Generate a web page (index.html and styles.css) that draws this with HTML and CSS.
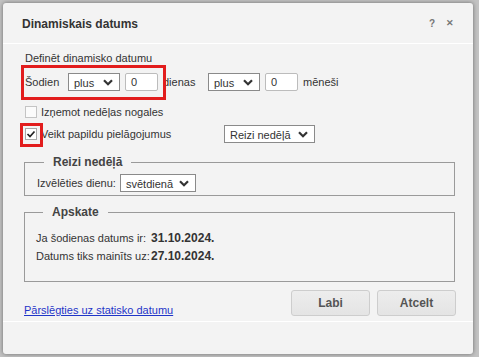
FILE: index.html
```html
<!DOCTYPE html>
<html lang="lv">
<head>
  <meta charset="UTF-8">
  <meta name="viewport" content="width=device-width, initial-scale=1.0">
  <title>Dinamiskais datums</title>
  <link rel="stylesheet" href="styles.css">
</head>
<body>
  <div class="dialog">
    <!-- Title bar -->
    <div class="title-bar">
      <span class="title">Dinamiskais datums</span>
      <span class="title-icons">
        <span class="icon-help">?</span>
        <span class="icon-close">&#x2715;</span>
      </span>
    </div>

    <div class="content">
      <div class="section-label">Definēt dinamisko datumu</div>

      <div class="row offset-row">
        <span class="lbl lbl-today">Šodien</span>
        <div class="select sel-small"><span>plus</span><svg class="chev" viewBox="0 0 10 7"><polyline points="1,1.2 5,5.2 9,1.2"/></svg></div>
        <div class="input">0</div>
        <span class="lbl lbl-days">dienas</span>
        <div class="select sel-small"><span>plus</span><svg class="chev" viewBox="0 0 10 7"><polyline points="1,1.2 5,5.2 9,1.2"/></svg></div>
        <div class="input">0</div>
        <span class="lbl">mēneši</span>
        <div class="mark mark-offset"></div>
      </div>

      <div class="row check-row">
        <span class="check"></span>
        <span class="lbl">Izņemot nedēļas nogales</span>
      </div>

      <div class="row adjust-row">
        <span class="check checked"><svg viewBox="0 0 10 10"><polyline points="1.5,5 4,7.5 8.5,2.5"/></svg></span>
        <span class="lbl lbl-adjust">Veikt papildu pielāgojumus</span>
        <div class="select sel-wide"><span>Reizi nedēļā</span><svg class="chev" viewBox="0 0 10 7"><polyline points="1,1.2 5,5.2 9,1.2"/></svg></div>
        <div class="mark mark-check"></div>
      </div>

      <fieldset class="group group-week">
        <legend>Reizi nedēļā</legend>
        <div class="row">
          <span class="lbl lbl-day">Izvēlēties dienu:</span>
          <div class="select sel-day"><span>svētdienā</span><svg class="chev" viewBox="0 0 10 7"><polyline points="1,1.2 5,5.2 9,1.2"/></svg></div>
        </div>
      </fieldset>

      <fieldset class="group group-preview">
        <legend>Apskate</legend>
        <div class="preview-row">
          <span class="lbl lbl-preview">Ja šodienas datums ir:</span>
          <span class="value">31.10.2024.</span>
        </div>
        <div class="preview-row">
          <span class="lbl lbl-preview">Datums tiks mainīts uz:</span>
          <span class="value">27.10.2024.</span>
        </div>
      </fieldset>

      <div class="actions">
        <a class="switch-link" href="#">Pārslēgties uz statisko datumu</a>
        <div class="buttons">
          <button class="btn">Labi</button>
          <button class="btn">Atcelt</button>
        </div>
      </div>
    </div>

    <div class="bottom-bar"></div>
  </div>
</body>
</html>
```

FILE: styles.css
```css
body {
  margin: 0;
  padding: 0;
  width: 479px;
  height: 357px;
  overflow: hidden;
  background-color: #c2c2c2;
  font-family: 'Liberation Sans', Arial, sans-serif;
  font-size: 11px;
  color: #333;
}

.dialog {
  margin: 3px 0 0 3px;
  width: 470px;
  height: 351px;
  background-color: #f3f3f3;
  border-radius: 3px;
  box-shadow: 0 0 4px rgba(0, 0, 0, 0.45);
  display: flex;
  flex-direction: column;
}

/* Title bar */
.title-bar {
  height: 40px;
  padding: 0 19px 0 19px;
  display: flex;
  align-items: center;
  justify-content: space-between;
  border-bottom: 1px solid #fff;
}

.title {
  font-weight: bold;
  font-size: 12px;
  color: #333;
  padding-top: 1px;
}

.title-icons {
  display: flex;
  gap: 11px;
  color: #777;
  font-weight: bold;
  font-size: 10px;
  padding-top: 1px;
}

.icon-close {
  font-size: 9px;
}

/* Content */
.content {
  padding: 7px 18px 0 21px;
  flex: 1;
  display: flex;
  flex-direction: column;
}

.section-label {
  height: 14px;
  line-height: 14px;
  padding-left: 1px;
}

.row {
  display: flex;
  align-items: center;
  position: relative;
}

.lbl {
  line-height: 14px;
  white-space: nowrap;
}

.offset-row {
  margin-top: 8px;
  height: 18px;
}

.lbl-today {
  width: 43px;
  padding-left: 1px;
}

.select {
  height: 18px;
  box-sizing: border-box;
  border: 1px solid #8a8a8a;
  background-color: #fff;
  display: flex;
  align-items: center;
  justify-content: space-between;
  padding: 1px 6px 0 5px;
  color: #333;
}

.chev {
  width: 10px;
  height: 7px;
  fill: none;
  stroke: #333;
  stroke-width: 2.2;
}

.sel-small {
  width: 52px;
}

.input {
  width: 33px;
  height: 18px;
  box-sizing: border-box;
  border: 1px solid #bcbcbc;
  border-radius: 2px;
  background-color: #fff;
  margin-left: 5px;
  padding: 1px 0 0 5px;
  line-height: 15px;
}

.input + .lbl {
  margin-left: 5px;
}

.lbl-days {
  width: 45px;
}

.check-row {
  margin-top: 14px;
  height: 14px;
}

.check {
  width: 10px;
  height: 10px;
  border: 1px solid #c4c4c4;
  background-color: #fbfbfb;
  margin: 0 4px 0 1px;
  flex: none;
  display: flex;
}

.check.checked {
  border-color: #a8a8a8;
  background-color: #fff;
}

.check svg {
  width: 10px;
  height: 10px;
  fill: none;
  stroke: #222;
  stroke-width: 1.7;
}

.adjust-row {
  margin-top: 6px;
  height: 18px;
}

.lbl-adjust {
  width: 183px;
}

.sel-wide {
  width: 91px;
}

/* Red highlight marks */
.mark {
  position: absolute;
  border: 3px solid #e21d1d;
  box-sizing: border-box;
  pointer-events: none;
}

.mark-offset {
  left: -3px;
  top: -8px;
  width: 145px;
  height: 35px;
}

.mark-check {
  left: -4px;
  top: -2px;
  width: 23px;
  height: 24px;
}

/* Groups */
.group {
  margin: 12px 0 0 0;
  border: 1px solid #9a9a9a;
  padding: 5px 12px 3px 12px;
  min-width: 0;
}

.group legend {
  margin-left: 7px;
  padding: 0 9px;
  font-weight: bold;
  font-size: 12px;
  line-height: 14px;
  color: #444;
}

.lbl-day {
  width: 83px;
}

.sel-day {
  width: 76px;
}

.group-preview {
  margin-top: 9px;
  padding: 10px 11px 16px 11px;
}

.preview-row {
  display: flex;
  height: 18px;
  align-items: center;
}

.lbl-preview {
  width: 115px;
}

.value {
  font-weight: bold;
  font-size: 12px;
  color: #333;
}

/* Footer actions */
.actions {
  margin-top: 8px;
  display: flex;
  justify-content: space-between;
  align-items: flex-end;
}

.switch-link {
  color: #1f35c8;
  text-decoration: underline;
  line-height: 14px;
  margin-bottom: -1px;
}

.buttons {
  display: flex;
  gap: 7px;
  margin-right: -1px;
}

.btn {
  width: 79px;
  height: 26px;
  border: 1px solid #cdcdcd;
  border-radius: 3px;
  background: linear-gradient(#ededed, #e4e4e4);
  font-family: 'Liberation Sans', Arial, sans-serif;
  font-weight: bold;
  font-size: 12px;
  color: #555;
  padding: 0;
}

.bottom-bar {
  height: 32px;
  border-top: 1px solid #fff;
}
```
